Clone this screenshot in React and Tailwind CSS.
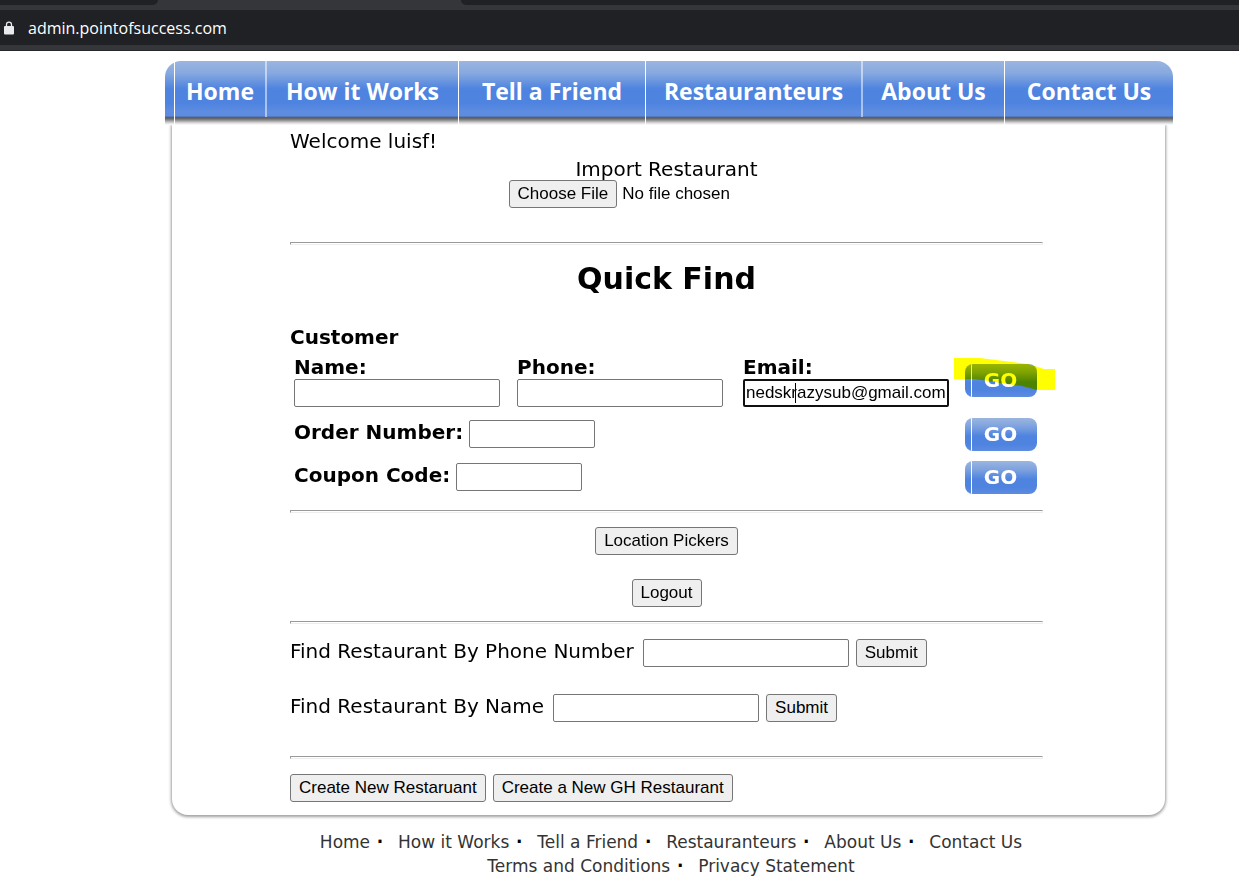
import { useState } from 'react'

const navItems = [
  { label: 'Home' },
  { label: 'How it Works', soft: true },
  { label: 'Tell a Friend' },
  { label: 'Restauranteurs' },
  { label: 'About Us', soft: true },
  { label: 'Contact Us' },
]
const siteLinks = navItems.map((item) => item.label)
const legalLinks = ['Terms and Conditions', 'Privacy Statement']

// blue glossy bar, the last 8px are the drop shadow under it
const barBg =
  'bg-[linear-gradient(#9bb5df_0px,#87a9df_12px,#4e83e0_28px,#4e83e0_42px,#5d8ce0_50px,#5d8ce0_55px,#4b669c_56px,#5c5c5c_57px,#8a8a8a_59px,#dcdcdc_62px,#ffffff_64px)]'

function BrowserBar() {
  return (
    <header className="border-b border-[#26272a] bg-[#35363a]">
      <div className="flex h-[10px] items-start justify-between">
        <div className="h-[5px] w-[158px] rounded-br-lg bg-[#202124]" />
        <div className="ml-[303px] h-[5px] flex-1 rounded-bl-lg bg-[#202124]" />
      </div>
      <div className="flex h-[35px] items-center bg-[#202124] pl-1">
        <svg width="10" height="14" viewBox="0 0 10 14" aria-hidden="true">
          <path d="M2.5 6V3.6a2.5 2.5 0 0 1 5 0V6" fill="none" stroke="#e8eaed" strokeWidth="1.3" />
          <rect x="0" y="5" width="10" height="8.5" rx="1" fill="#e8eaed" />
        </svg>
        <span className="ml-[14px] font-['Open_Sans',sans-serif] text-base leading-6 text-white">
          admin.pointofsuccess.com
        </span>
      </div>
      <div className="h-[5px]" />
    </header>
  )
}

function NavBar() {
  return (
    <nav>
      <ul className="grid grid-cols-[9fr_91fr_193fr_187fr_216fr_143fr_169fr] overflow-hidden rounded-t-2xl font-['Open_Sans',sans-serif] text-[23px] font-bold text-white">
        <li className={`h-16 ${barBg}`} aria-hidden="true" />
        {navItems.map((item) => (
          <li key={item.label} className={`h-16 ${item.soft ? '' : 'border-l border-white'} ${barBg}`}>
            <a
              href="#"
              className={`block h-14 text-center leading-[60px] whitespace-nowrap ${item.soft ? 'border-l-2 border-white/50' : ''}`}
            >
              {item.label}
            </a>
          </li>
        ))}
      </ul>
    </nav>
  )
}

function Rule() {
  return <hr className="h-[3px] border border-t-[#9a9a9a] border-r-[#eeeeee] border-b-[#eeeeee] border-l-[#9a9a9a]" />
}

function GreyButton({ children }) {
  return (
    <button
      type="button"
      className="h-7 rounded-[3px] border border-[#767676] bg-[#efefef] px-2 font-['Liberation_Sans',Arial,sans-serif] text-[17px] leading-6 whitespace-nowrap text-black"
    >
      {children}
    </button>
  )
}

function GoButton() {
  return (
    <button
      type="button"
      className="flex h-[33px] w-[72px] overflow-hidden rounded-lg bg-[linear-gradient(#9bb5df,#7fa3df_25%,#4e83e0_55%,#4e83e0_80%,#5d8ce0)] text-xl font-bold text-white"
    >
      <span className="h-full w-[7px] border-r border-white" />
      <span className="flex-1 pr-2 text-center leading-8">GO</span>
    </button>
  )
}

function TextBox({ id, className, ...rest }) {
  return (
    <input
      id={id}
      type="text"
      className={`h-7 rounded-[2px] bg-white font-['Liberation_Sans',Arial,sans-serif] text-[17px] text-black ${className}`}
      {...rest}
    />
  )
}

function CodeRow({ id, label }) {
  return (
    <div className="flex items-start pr-[6px] pl-1">
      <div className="mt-[2px] flex items-start">
        <label htmlFor={id} className="leading-6 font-bold">{label}</label>
        <TextBox id={id} className="ml-[6px] w-[126px] border border-[#767676] px-1" />
      </div>
      <div className="ml-auto">
        <GoButton />
      </div>
    </div>
  )
}

function FindRow({ id, label }) {
  return (
    <div className="flex items-start">
      <label htmlFor={id} className="leading-6">{label}</label>
      <TextBox id={id} className="mr-[7px] ml-[9px] w-[206px] border border-[#767676] px-1" />
      <GreyButton>Submit</GreyButton>
    </div>
  )
}

function QuickFind() {
  const [email, setEmail] = useState('nedskrazysub@gmail.com')

  return (
    <section>
      <h1 className="mt-[14px] text-center text-[30px] leading-10 font-bold">Quick Find</h1>
      <h2 className="mt-[26px] text-xl leading-6 font-bold">Customer</h2>
      <div className="mt-[6px] flex items-start pr-[6px] pl-1">
        <div className="flex flex-col">
          <label htmlFor="name" className="leading-6 font-bold">Name:</label>
          <TextBox id="name" className="w-[206px] border border-[#767676] px-1" />
        </div>
        <div className="ml-[17px] flex flex-col">
          <label htmlFor="phone" className="leading-6 font-bold">Phone:</label>
          <TextBox id="phone" className="w-[206px] border border-[#767676] px-1" />
        </div>
        <div className="ml-5 flex flex-col">
          <label htmlFor="email" className="leading-6 font-bold">Email:</label>
          <div className="relative flex">
            <TextBox
              id="email"
              className="w-[206px] border-2 border-[#101010] pl-px"
              value={email}
              onChange={(e) => setEmail(e.target.value)}
            />
            <span className="absolute top-1 left-[52px] h-5 w-px bg-black" />
          </div>
        </div>
        <div className="relative mt-[9px] ml-auto">
          <GoButton />
          {/* highlighter stroke over the button */}
          <svg
            className="pointer-events-none absolute -top-[6px] -left-[11px] mix-blend-multiply"
            width="102"
            height="33"
            viewBox="0 0 102 33"
            aria-hidden="true"
          >
            <path d="M0 0H26L58 4L74 6L90 11H101V32H83L68 28L53 26L35 23L20 21H0Z" fill="#ffff00" />
          </svg>
        </div>
      </div>
      <div className="mt-[11px] mb-4 flex flex-col gap-[10px]">
        <CodeRow id="order" label="Order Number:" />
        <CodeRow id="coupon" label="Coupon Code:" />
      </div>
    </section>
  )
}

function FooterLinks({ items }) {
  return (
    <ul className="flex justify-center">
      {items.map((item, i) => (
        <li key={item} className="flex whitespace-nowrap">
          <a href="#" className="text-[#333333]">{item}</a>
          {i < items.length - 1 && <span className="mr-2 w-5 text-center font-bold text-black">·</span>}
        </li>
      ))}
    </ul>
  )
}

export default function App() {
  return (
    <div className="bg-white font-['DejaVu_Sans',Verdana,sans-serif] text-xl text-black">
      <BrowserBar />
      <div className="pt-[10px] pl-[99px]">
        <div className="mx-auto max-w-[1008px]">
          <NavBar />
          <main className="mr-2 ml-[7px] rounded-b-2xl bg-white pt-1 pr-[122px] pb-[13px] pl-[118px] shadow-[0_1px_3px_1px_#a0a0a0] [clip-path:inset(0px_-8px_-8px_-8px)]">
            <p className="leading-6">Welcome luisf!</p>
            <div className="mt-1 mb-[34px] flex flex-col items-center">
              <label htmlFor="import" className="leading-6">Import Restaurant</label>
              <input
                id="import"
                type="file"
                className="-mt-px h-7 w-[316px] font-['Liberation_Sans',Arial,sans-serif] text-[17px] leading-6 file:mr-[5px] file:h-7 file:rounded-[3px] file:border file:border-solid file:border-[#767676] file:bg-[#efefef] file:px-2 file:text-black"
              />
            </div>
            <Rule />
            <QuickFind />
            <Rule />
            <div className="flex flex-col items-center gap-6 py-[14px]">
              <GreyButton>Location Pickers</GreyButton>
              <GreyButton>Logout</GreyButton>
            </div>
            <Rule />
            <div className="mt-[15px] mb-[34px] flex flex-col gap-[27px]">
              <FindRow id="find-phone" label="Find Restaurant By Phone Number" />
              <FindRow id="find-name" label="Find Restaurant By Name" />
            </div>
            <Rule />
            <div className="mt-[15px] flex gap-[7px]">
              <GreyButton>Create New Restaruant</GreyButton>
              <GreyButton>Create a New GH Restaurant</GreyButton>
            </div>
          </main>
          <footer className="mt-[15px] pl-1 text-[17px] leading-6">
            <FooterLinks items={siteLinks} />
            <FooterLinks items={legalLinks} />
          </footer>
        </div>
      </div>
    </div>
  )
}
